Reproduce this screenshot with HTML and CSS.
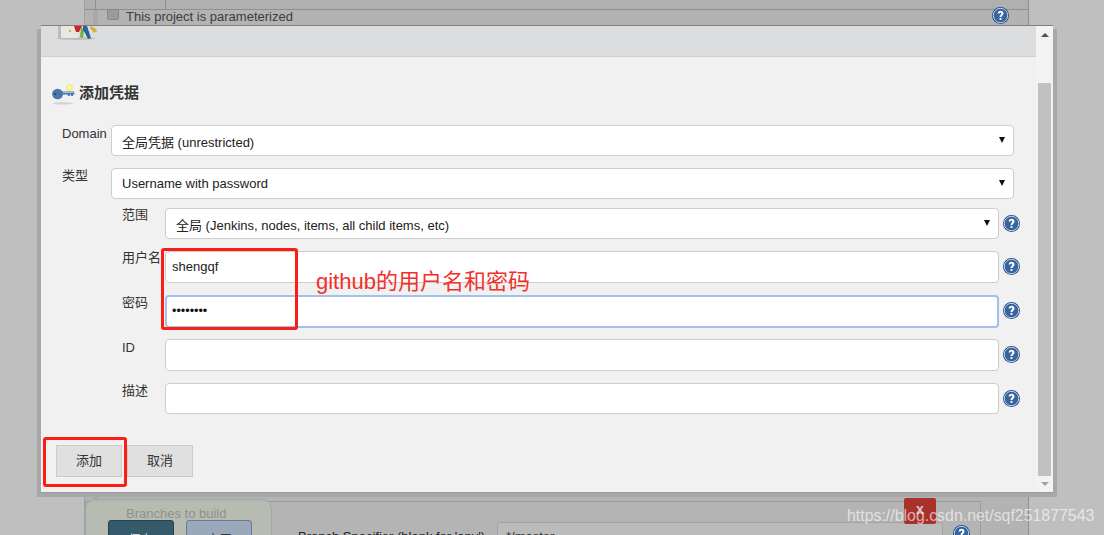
FILE: index.html
```html
<!DOCTYPE html>
<html lang="zh">
<head>
<meta charset="utf-8">
<title>添加凭据</title>
<link rel="stylesheet" href="styles.css">
</head>
<body>
<div class="page">
  <div class="bg-inner"></div>
  <div class="bg-line bg-l1"></div>
  <div class="bg-line bg-l2"></div>
  <div class="bg-line bg-r1"></div>
  <div class="bg-row bg-row-top"></div>
  <div class="bg-tick bg-t1"></div>
  <div class="bg-tick bg-t2"></div>
  <div class="bg-check"></div>
  <div class="bg-param">This project is parameterized</div>
  <svg class="help bg-help-top" viewBox="0 0 16 16"><use href="#q"/></svg>
  <div class="bg-bottom-row"></div>
  <div class="bg-branches">
    <span class="bg-branches-t">Branches to build</span>
    <div class="bg-btns"><span class="bg-save">保存</span><span class="bg-apply">应用</span></div>
  </div>
  <div class="bg-spec">Branch Specifier (blank for 'any')</div>
  <div class="bg-spec-input">*/master</div>
  <div class="bg-x">x</div>
  <svg class="help bg-help-bot" viewBox="0 0 16 16"><use href="#q"/></svg>
</div>

<div class="dialog">
  <div class="scroll">
    <span class="arrow-up"></span>
    <span class="thumb"></span>
    <span class="arrow-down"></span>
  </div>
  <div class="main">
    <div class="band">
      <svg class="band-icon" viewBox="0 0 44 14">
        <ellipse cx="20" cy="12.6" rx="19" ry="1.4" fill="#bdbdbd"/>
        <rect x="2" y="0" width="20" height="12" fill="#e8e8e2"/>
        <rect x="2" y="0" width="3" height="12" fill="#bcbcb4"/>
        <rect x="13" y="4" width="2" height="2" fill="#d6b23c"/>
        <path d="M18 0h8l-3 6h-3z" fill="#c9242b"/>
        <path d="M25 2l3 1-1 9-3-1z" fill="#6bb52e"/>
        <path d="M27 0h4l4 12-3 1-3-6-2-3z" fill="#2e5f9e"/>
        <path d="M35 0l5 3 1 2-3 2-4-5z" fill="#d6b23c"/>
      </svg>
    </div>
    <div class="content">
      <h2 class="title">
        <svg class="key" viewBox="0 0 24 22">
          <ellipse cx="11" cy="19.4" rx="10" ry="1.2" fill="#d2d2d2"/>
          <circle cx="17.5" cy="3.6" r="3.4" fill="#f6f06a"/>
          <circle cx="17.5" cy="3.6" r="1.8" fill="#fbf9b8"/>
          <ellipse cx="5.6" cy="10" rx="5.5" ry="5.2" fill="#4a75ad"/>
          <path d="M10 7.6h12l.5 2.9h-1.5v1.4h-2v-1.4h-1.2v1.4h-2v-1.4h-5.8z" fill="#4a75ad"/>
          <path d="M11 8.5h10.5" stroke="#b4cbe7" stroke-width="0.9"/>
          <circle cx="3.2" cy="10" r="1" fill="#24436f"/>
        </svg>
        添加凭据
      </h2>
      <div class="row row-domain">
        <label class="lbl">Domain</label>
        <div class="sel sel-low">全局凭据 (unrestricted)<i class="caret"></i></div>
      </div>
      <div class="row row-kind">
        <label class="lbl">类型</label>
        <div class="sel">Username with password<i class="caret"></i></div>
      </div>
      <div class="sub">
        <div class="row sub-row r1">
          <label class="lbl lbl-up">范围</label>
          <div class="sel">全局 (Jenkins, nodes, items, all child items, etc)<i class="caret"></i></div>
          <svg class="help" viewBox="0 0 16 16"><use href="#q"/></svg>
        </div>
        <div class="row sub-row r2">
          <label class="lbl lbl-up">用户名</label>
          <div class="inp">shengqf</div>
          <svg class="help" viewBox="0 0 16 16"><use href="#q"/></svg>
        </div>
        <div class="row sub-row r3">
          <label class="lbl">密码</label>
          <div class="inp focus"><span class="dots">••••••••</span></div>
          <svg class="help" viewBox="0 0 16 16"><use href="#q"/></svg>
        </div>
        <div class="row sub-row r4">
          <label class="lbl lbl-mid">ID</label>
          <div class="inp"></div>
          <svg class="help" viewBox="0 0 16 16"><use href="#q"/></svg>
        </div>
        <div class="row sub-row r5">
          <label class="lbl">描述</label>
          <div class="inp"></div>
          <svg class="help" viewBox="0 0 16 16"><use href="#q"/></svg>
        </div>
      </div>
      <div class="actions">
        <button class="btn">添加</button>
        <button class="btn">取消</button>
      </div>
    </div>
  </div>
</div>

<div class="mark mark-user"></div>
<div class="mark mark-add"></div>
<div class="note">github的用户名和密码</div>
<div class="watermark">https://blog.csdn.net/sqf251877543</div>

<svg class="defs" width="0" height="0">
  <defs>
    <g id="q">
      <circle cx="8" cy="8" r="8" fill="#24508f"/>
      <circle cx="8" cy="8" r="6.7" fill="none" stroke="#dfe7f3" stroke-width="0.9"/>
      <circle cx="8" cy="8" r="5.9" fill="#38649f"/>
      <path d="M5.3 6.2C5.4 4.5 6.6 3.6 8.1 3.6c1.6 0 2.7 1 2.7 2.4 0 1.8-1.9 1.9-1.9 3.5H7.1c0-2.2 1.7-2.3 1.7-3.5 0-.5-.3-.8-.8-.8-.6 0-.9.4-1 1z" fill="#fff"/>
      <rect x="7.1" y="10.3" width="1.8" height="1.8" fill="#fff"/>
    </g>
  </defs>
</svg>
</body>
</html>
```
FILE: styles.css
```css
* { box-sizing: border-box; }
html, body { margin: 0; padding: 0; }
body {
  width: 1104px;
  height: 535px;
  overflow: hidden;
  position: relative;
  background: #bfbfbf;
  font-family: "Liberation Sans", "Noto Sans CJK SC", sans-serif;
  font-size: 13px;
  color: #333;
}
.defs { position: absolute; }

/* dimmed page behind the dialog */
.page { position: absolute; inset: 0; overflow: hidden; background: #bfbfbf; }
.bg-inner { position: absolute; left: 85px; width: 943px; top: 0; bottom: 0; background: #b3b3b3; }
.bg-line { position: absolute; top: 0; bottom: 0; background: #a0a0a0; width: 1px; }
.bg-l1 { left: 84px; }
.bg-l2 { left: 93px; width: 5px; background: #a9a9a9; }
.bg-r1 { left: 1028px; background: #8f8f8f; }
.bg-row { position: absolute; }
.bg-row-top { left: 85px; width: 943px; top: 0; height: 10px; border-bottom: 1px solid #8f8f8f; background: #b0b0b0; }
.bg-tick { position: absolute; top: 0; height: 9px; width: 1px; background: #8f8f8f; }
.bg-t1 { left: 95px; }
.bg-t2 { left: 165px; }
.bg-check {
  position: absolute; left: 107px; top: 9px; width: 12px; height: 11px;
  background: #9b9b9b; border: 1px solid #888; border-radius: 2px;
}
.bg-param { position: absolute; left: 126px; top: 9px; line-height: 15px; color: #3d3d3d; }
.bg-help-top { position: absolute; left: 992px; top: 7px; width: 16px; height: 16px; }
.bg-bottom-row { position: absolute; left: 85px; width: 896px; top: 501px; height: 40px; border: 1px solid #9d9d9d; background: #b4b4b4; }
.bg-branches {
  position: absolute; left: 85px; top: 499px; width: 187px; height: 50px;
  background: rgba(184, 190, 176, .75); border: 1px solid #9aaba5; border-radius: 10px 10px 0 0;
}
.bg-branches-t { position: absolute; left: 40px; top: 6px; color: #8f928c; }
.bg-btns { position: absolute; left: 22px; top: 20px; display: flex; gap: 12px; }
.bg-save, .bg-apply {
  width: 66px; height: 30px; border-radius: 3px; text-align: center; font-size: 13px; line-height: 38px;
}
.bg-save { background: #345a6b; border: 1px solid #25434f; color: #cfd8dc; }
.bg-apply { background: #9aa8ba; border: 1px solid #5f7d9f; color: #2e3a46; }
.bg-spec { position: absolute; left: 298px; top: 529px; color: #222; line-height: 15px; }
.bg-spec-input {
  position: absolute; left: 497px; top: 522px; width: 446px; height: 30px; padding: 6px 8px;
  border: 1px solid #a3a3a3; border-radius: 3px; background: #bbb; color: #333;
}
.bg-x {
  position: absolute; left: 904px; top: 498px; width: 32px; height: 26px;
  background: #a8322b; border-radius: 2px; color: #d9c9cf; text-align: center;
  font-weight: bold; font-size: 14px; line-height: 22px;
}
.bg-help-bot { position: absolute; left: 953px; top: 525px; width: 16px; height: 16px; }

/* dialog */
.dialog {
  position: absolute; left: 41px; top: 25px; width: 1012px; height: 468px;
  display: flex; flex-direction: row-reverse;
  background: #f1f1f1; border-top: 1px solid #808080; border-bottom: 1px solid #9b9b9b;
  box-shadow: -4px 4px 0 #a8a8a8, 4px 4px 0 #a8a8a8;
  overflow: hidden;
}
.main { flex: 1; min-width: 0; display: flex; flex-direction: column; }
.band { height: 31px; background: #dcddde; border-bottom: 1px solid #cfcfcf; position: relative; flex: none; }
.band-icon { position: absolute; left: 15px; top: 0; width: 44px; height: 14px; }
.content { flex: 1; }
.scroll { width: 17px; background: #f3f3f3; position: relative; flex: none; }
.thumb { position: absolute; left: 2px; top: 57px; width: 13px; height: 393px; background: #c1c1c1; }
.arrow-up { position: absolute; left: 5px; top: 7px; border: 4px solid transparent; border-bottom: 4px solid #505050; border-top: 0; }
.arrow-down { position: absolute; left: 5px; top: 456px; border: 4px solid transparent; border-top: 4px solid #a3a3a3; border-bottom: 0; }

.title {
  margin: 0; padding: 27px 0 0 11px; height: 68px;
  display: flex; align-items: flex-start; gap: 3px;
  font-size: 15px; font-weight: bold; line-height: 18px; color: #333;
}
.key { width: 24px; height: 22px; flex: none; }
.row { display: flex; position: relative; }
.lbl { flex: none; line-height: 15px; color: #333; }
.lbl-up { margin-top: -1px; }
.lbl-mid { padding-top: 1px; }
.row-domain, .row-kind { padding-left: 21px; }
.row-domain { height: 43px; }
.row-kind { height: 40px; }
.row-domain .lbl { width: 49px; padding-top: 1px; }
.row-kind .lbl { width: 49px; }
.sel, .inp {
  position: relative; background: #fff; border: 1px solid #cdcdcd; border-radius: 4px;
  color: #222; line-height: 15px;
}
.sel { padding: 7px 10px; }
.sel-low { padding-top: 9px; }
.row-domain .sel, .row-kind .sel { width: 903px; height: 31px; }
.caret {
  position: absolute; right: 8px; top: 11px;
  border: 3.5px solid transparent; border-top: 6px solid #111; border-bottom: 0;
}
.sub { padding-left: 81px; }
.sub-row { height: 44px; align-items: flex-start; }
.sub-row .lbl { width: 43px; }
.sub-row .sel, .sub-row .inp { width: 834px; height: 32px; }
.sub-row .inp { padding: 7px 6px; }
.r1 { height: 43px; }
.r1 .sel { height: 31px; padding-top: 9px; }
.r5 .inp { height: 31px; }
.r3 .inp { height: 33px; }
.focus { border: 2px solid #a3bfee; padding: 6px 5px !important; }
.dots { font-size: 12.6px; color: #111; }
.help { width: 17px; height: 17px; margin: 7px 0 0 4px; flex: none; }
.page .help { margin: 0; }
.actions { display: flex; gap: 5px; padding: 18px 0 0 15px; }
.btn {
  width: 66px; height: 32px; background: #e0e0e0; border: 1px solid #cbcbcb; border-radius: 0;
  font: 13px "Liberation Sans", "Noto Sans CJK SC", sans-serif; color: #333; padding: 0 0 3px;
}

/* annotation layer */
.mark { position: absolute; border: 3px solid #fb1e14; border-radius: 3px; }
.mark-user { left: 161px; top: 248px; width: 137px; height: 82px; }
.mark-add { left: 43px; top: 437px; width: 84px; height: 50px; }
.note { position: absolute; left: 316px; top: 269px; font-size: 22px; line-height: 26px; color: #f2302b; white-space: nowrap; }
.watermark {
  position: absolute; left: 847px; top: 507px; font-size: 15.9px; line-height: 18px;
  color: rgba(255,255,255,.62); white-space: nowrap;
}
```
